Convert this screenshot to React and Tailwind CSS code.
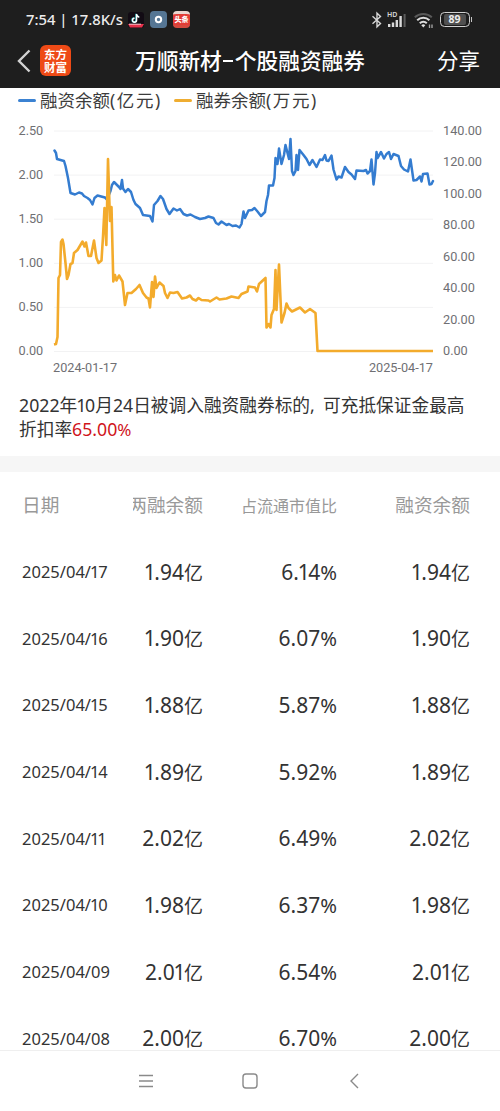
import React from "react";

const FINANCING =
  "54.5,150.5 56,153 57,159 64,161 65.5,166 68,178 70.5,193 75,194.5 79,192.5 82,193.5 84,196 87.5,198 90,200 92.5,204.5 94.5,198 97.5,195.5 105,197.5 107,199.5 110.5,191 112,185 114,182 117,185 119,187 120.5,189 122,180 123,188.5 125.5,192 128,189 131,192 133.5,200 135.5,204 140,208 143,215 150,216 152.5,221.5 154,205 157.5,201 160.5,196 163,199 166.5,209 169.5,214 173.5,208.5 177,210.5 180,209 183.5,214 187,215.5 190.5,214.5 195,217 200,219 205,218 208.5,216.5 213.5,218 216,223 218.5,224.5 221.5,221.5 226.5,225 229,224 232.5,226 236,225.5 239.5,227.5 241.5,224 243.5,211.5 245,218 248.5,210.5 252,210 254.5,208 257.5,211.5 261,216 265,212 266.5,201 268,195 269,185.5 273,185.5 274.5,178 275.5,158 277.5,164 279,148.5 281.5,164 284,155 285.5,145 289,159 290.5,139 292,171 293.5,175 295.5,171 296.5,155 298,170 299.5,150 303.5,155 306.5,159 309.5,165 312.5,160 316.5,167 320,159.5 322.5,160 325,155 326.5,160.5 328.5,161 331.5,155.5 333.5,169.5 336.5,179.5 338.5,176.5 341.5,177.5 345,167 348.5,172 351.5,174.5 355,179 356.5,170.5 363.5,171 366,170 367.5,173.5 370,171 371.5,159.5 373.5,184.5 375,173 376.5,152 377.5,158 381,152 384,158.5 386.5,154 389,152 391,159 393.5,154 398.5,156 401,166 404,169.5 408,171.5 410.5,159.5 413.5,180.5 416.5,180 420,176.5 421.5,181.5 423,174 427.5,173.5 429.5,184.5 431.5,184 433,181";

const LENDING =
  "54,344.5 56,344 57.5,337 58.5,278 60,275 61,242 62.5,239.5 63.5,244 65.5,263 67,279 68.5,275 70.5,264 72.5,263 74,253 77.5,250 82.5,241.5 84.5,246.5 86,242.5 88.5,256 91,256 94,240.5 96.5,258 98.5,263 101.5,260.5 103,236.7 104.5,208 106.3,245 108,159 110,221 111.5,207 113.3,281.5 115,275 116.5,280.5 119,275.5 122.5,281.5 125,305 127.5,293 131.5,293 136,289 139.5,285 143,293 146.5,297.5 148.5,298.5 150,307.5 152,282 153.5,297 155,276.5 156.5,288 159.5,282.5 163.5,286 165,293 167.5,298 170,292.5 173.5,293 177.5,292 182,298.5 186.5,297.5 190,295.5 192.5,299 196,300.5 198.5,298 201.5,300 208.5,300.5 210,301.5 216.5,297.5 219.5,299.5 226.5,298.5 231.5,296.5 238.5,298 241.5,294 247.5,291.5 248.5,286.5 255,287.5 257,291.5 259,284 265.5,278 266.5,327.5 268.5,324 270.5,327.5 271.5,315 274,309 275.5,270 276.5,310 279,264.5 281.5,322.5 284.5,313 286.5,303.5 288.5,308 292,311.5 300,307.5 305,312.5 310,309 315.5,313 317.5,351 433,351";

const ROWS = [
  ["2025/04/17", "1.94", "6.14%"],
  ["2025/04/16", "1.90", "6.07%"],
  ["2025/04/15", "1.88", "5.87%"],
  ["2025/04/14", "1.89", "5.92%"],
  ["2025/04/11", "2.02", "6.49%"],
  ["2025/04/10", "1.98", "6.37%"],
  ["2025/04/09", "2.01", "6.54%"],
  ["2025/04/08", "2.00", "6.70%"],
];

// The digit 1 is set tighter than the other figures.
function Figures({ text }) {
  return (
    <span>
      {text.split("").map((c, i) =>
        c === "1" ? (
          <span key={i} className="-ml-[0.06em] -mr-[0.07em]">{c}</span>
        ) : c === "%" ? (
          <span key={i} className="text-[0.96em]">{c}</span>
        ) : (
          c
        )
      )}
    </span>
  );
}

function Amount({ value }) {
  return (
    <div className="flex items-baseline justify-end">
      <Figures text={value} />
      <span className="text-[19px]">亿</span>
    </div>
  );
}

function StatusBar() {
  return (
    <div className="flex h-[39px] items-center pl-[26px] pr-[28px] text-[#ececec]">
      <span className="w-[97px] whitespace-nowrap text-[14.8px] font-medium leading-none">7:54 | 17.8K/s</span>
      <svg className="ml-[5px]" width="16" height="16" viewBox="0 0 16 16">
        <rect width="16" height="16" rx="3" fill="#120b14" />
        <path d="M8.6 2v6.3a2 2 0 1 1-2-2M8.6 2.3c.3 1.7 1.3 2.6 2.8 2.8" fill="none" stroke="#41d8dc" strokeWidth="1.5" transform="translate(-.5 -.3)" />
        <path d="M8.6 2v6.3a2 2 0 1 1-2-2M8.6 2.3c.3 1.7 1.3 2.6 2.8 2.8" fill="none" stroke="#fff" strokeWidth="1.4" />
        <path d="M0 12h16l-2 3.5H2z" fill="#e6324b" />
        <path d="M1 12.2h12" stroke="#f3c9cf" strokeWidth="1" />
      </svg>
      <svg className="ml-[6px]" width="17" height="17" viewBox="0 0 17 17">
        <rect width="17" height="17" rx="4" fill="#557694" />
        <circle cx="8.5" cy="8.5" r="2.7" fill="none" stroke="#fff" strokeWidth="2" />
      </svg>
      <div className="ml-[6px] flex h-[17px] w-[17px] items-center justify-center overflow-hidden rounded-[4px] border-y-[3px] border-[#ead6d0] border-b-[#d4493e] bg-[#e23c35] text-[7px] font-black leading-none text-white">
        <span className="whitespace-nowrap">头条</span>
      </div>
      <div className="ml-auto flex items-center">
        <svg width="12" height="18" viewBox="0 0 12 18" fill="none" stroke="#d6d6d6" strokeWidth="1.4">
          <path d="M1.5 5.2l8 7.3L6 15.8V2.2l3.5 3.3-8 7.3" />
        </svg>
        <svg className="ml-[4px]" width="20" height="18" viewBox="0 0 20 18">
          <text x="0" y="6" fontSize="7" fontWeight="600" fill="#d6d6d6">HD</text>
          <path d="M2.2 16v-3M6 16v-4.500M9.8 16V9M13.6 16V5" stroke="#dadada" strokeWidth="2.4" />
          <path d="M17.6 16V3" stroke="#5c5c5c" strokeWidth="2" />
        </svg>
        <svg className="ml-[7px]" width="20" height="18" viewBox="0 0 20 18" fill="none" strokeWidth="2">
          <path d="M.8 6.3a12.5 12.5 0 0 1 17 0" stroke="#5a5a5a" />
          <path d="M3.2 9.3a8.8 8.8 0 0 1 12.2 0M5.8 12.3a5 5 0 0 1 7 0" stroke="#dedede" />
          <path d="M7.3 14.2l2 2.2 2-2.2a2.8 2.8 0 0 0-4 0z" fill="#dedede" />
          <path d="M15.5 13.500v3.500M18 13.500v3.500" stroke="#a9a9a9" strokeWidth="1.3" />
        </svg>
        <div className="ml-[6px] flex h-[15px] w-[30px] items-center justify-center rounded-[4.5px] border-[1.5px] border-[#d0d0d0] p-[1px]">
          <span className="flex h-full w-[22px] items-center justify-center rounded-[2px] bg-[#505050] text-[10.5px] font-bold leading-none">89</span>
        </div>
        <span className="ml-[1px] h-[5px] w-[1.5px] bg-[#c4c4c4]" />
      </div>
    </div>
  );
}

function TitleBar() {
  return (
    <div className="grid h-[49px] grid-cols-[85px_1fr_85px] pb-[6px] text-white">
      <div className="flex items-center pl-[17px]">
        <svg width="14" height="24" viewBox="0 0 14 24" fill="none" stroke="#d2d2d2" strokeWidth="2.4">
          <path d="M12.5 1.5L2 12l10.500 10.500" />
        </svg>
        <div className="ml-[9px] flex h-[31px] w-[31px] flex-col items-center justify-center rounded-[6px] bg-[#ee4a16] text-[11.5px] font-bold leading-[13px]">
          <span>东方</span>
          <span>财富</span>
        </div>
      </div>
      <div className="flex items-center justify-center whitespace-nowrap text-[21.7px] font-medium leading-none">
        <span>万顺新材</span>
        <span className="mx-[1.5px] h-[2px] w-[10px] bg-white" />
        <span>个股融资融券</span>
      </div>
      <div className="flex items-center justify-end pr-[20px] text-[21.5px] leading-none">分享</div>
    </div>
  );
}

function Legend() {
  return (
    <div className="flex h-[25px] shrink-0 items-center pl-[18px] text-[17.5px] leading-none text-[#3c3c3c]">
      <span className="h-[3px] w-[18px] rounded-sm bg-[#3b82d2]" />
      <span className="ml-[4px] w-[120px] whitespace-nowrap">融资余额<span className="tracking-[1.6px]">(亿元)</span></span>
      <span className="ml-[14px] h-[3px] w-[18px] rounded-sm bg-[#efad31]" />
      <span className="ml-[4px] whitespace-nowrap">融券余额<span className="tracking-[1.6px]">(万元)</span></span>
    </div>
  );
}

function Chart() {
  return (
    <svg className="block shrink-0" width="500" height="269" viewBox="0 113 500 269" fontFamily="Roboto, sans-serif" fontSize="12.7" fill="#6f6f73">
      {["2.50", "2.00", "1.50", "1.00", "0.50", "0.00"].map((t, i) => (
        <g key={t}>
          <path d={`M54 ${131 + i * 44.1}H433`} stroke="#f2f2f3" />
          <text x="18.500" y={134.500 + i * 44.1}>{t}</text>
        </g>
      ))}
      {["140.00", "120.00", "100.00", "80.00", "60.00", "40.00", "20.00", "0.00"].map((t, i) => (
        <text key={t} x="443" y={134.500 + i * 31.55}>{t}</text>
      ))}
      <text x="53" y="371.500">2024-01-17</text>
      <text x="433" y="371.500" textAnchor="end">2025-04-17</text>
      <polyline points={FINANCING} fill="none" stroke="#347cd0" strokeWidth="2.5" strokeLinejoin="round" strokeLinecap="round" />
      <polyline points={LENDING} fill="none" stroke="#f3ab2c" strokeWidth="2.6" strokeLinejoin="round" />
    </svg>
  );
}

export default function App() {
  return (
    <div className="flex h-[1111px] w-[500px] flex-col overflow-hidden bg-white font-['Noto_Sans','Noto_Sans_CJK_SC',sans-serif] text-[#333]">
      <header className="h-[88px] shrink-0 bg-[#1e1e1e]">
        <StatusBar />
        <TitleBar />
      </header>
      <main className="flex min-h-0 flex-1 flex-col overflow-hidden">
        <Legend />
        <Chart />
        <div className="h-[74px] shrink-0 whitespace-nowrap pl-[19px] pt-[11px] text-[17.7px] leading-[24px]">
          <p><Figures text="2022" />年<Figures text="10" />月<Figures text="24" />日被调入融资融券标的<span className="inline-block w-[13px]">,</span>可充抵保证金最高</p>
          <p>折扣率<span className="text-[#d0141b]"><Figures text="65.00%" /></span></p>
        </div>
        <div className="h-[16px] shrink-0 bg-[#f6f6f6]" />
        <section className="shrink-0 pl-[22px]">
          <div className="grid h-[67px] grid-cols-[111px_70px_134px_133px] items-center whitespace-nowrap text-[18.7px] text-[#999]">
            <span>日期</span>
            <span className="flex justify-end overflow-hidden">两融余额</span>
            <span className="text-right text-[16px]">占流通市值比</span>
            <span className="text-right">融资余额</span>
          </div>
          {ROWS.map(([date, amount, share]) => (
            <div key={date} className="grid h-[66.67px] grid-cols-[111px_70px_134px_133px] items-center whitespace-nowrap text-[21px] leading-none">
              <span className="text-[16.5px]"><Figures text={date} /></span>
              <Amount value={amount} />
              <span className="text-right"><Figures text={share} /></span>
              <Amount value={amount} />
            </div>
          ))}
        </section>
      </main>
      <nav className="flex h-[61px] shrink-0 items-center justify-center gap-[88px] border-t border-[#efefef] bg-white">
        <svg width="16" height="16" viewBox="0 0 16 16" stroke="#8a8a8a" strokeWidth="1.3">
          <path d="M1 2.500h14M1 8h14M1 13.500h14" />
        </svg>
        <svg width="16" height="16" viewBox="0 0 16 16" fill="none" stroke="#8a8a8a" strokeWidth="1.4">
          <rect x="1" y="1" width="14" height="14" rx="3" />
        </svg>
        <svg width="16" height="16" viewBox="0 0 16 16" fill="none" stroke="#8a8a8a" strokeWidth="1.4">
          <path d="M12 1L5 8l7 7" />
        </svg>
      </nav>
    </div>
  );
}
